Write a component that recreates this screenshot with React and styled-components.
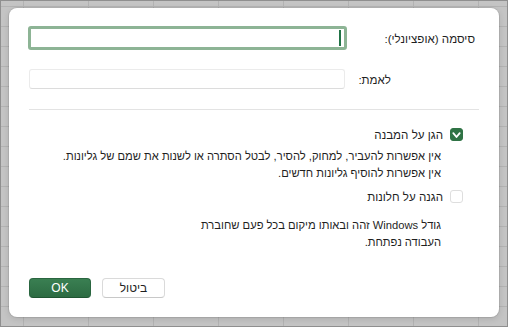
import React from "react";
import styled, { createGlobalStyle } from "styled-components";

const GlobalStyle = createGlobalStyle`
  html, body {
    margin: 0;
    padding: 0;
  }
  body {
    font-family: "Liberation Sans", Arial, sans-serif;
    color: #1f1f1f;
  }
`;

// the spreadsheet showing behind the dialog
const Sheet = styled.div`
  box-sizing: border-box;
  height: 327px;
  padding: 7px 8px 9px 8px;
  background-color: #c4c4c4;
  background-image: linear-gradient(to right, #b3b3b3 1px, transparent 1px),
    linear-gradient(to bottom, #b3b3b3 1px, transparent 1px);
  background-size: 65px 20px;
  background-position: 22px 5px;
  border: 1px solid #8f8f8f;
`;

const Dialog = styled.div`
  direction: rtl;
  box-sizing: border-box;
  height: 100%;
  background: #ffffff;
  border-radius: 8px;
  box-shadow: 0 0 0 1px rgba(0, 0, 0, 0.08), 0 2px 6px rgba(0, 0, 0, 0.12);
  padding: 18px 24px 19px 20px;
  display: flex;
  flex-direction: column;
  font-size: 11.6px;
`;

const FieldRow = styled.div`
  display: flex;
  align-items: center;
  justify-content: space-between;
  margin-top: ${(p) => p.$top || 0}px;
`;

const Label = styled.label`
  margin-right: ${(p) => p.$inset || 0}px;
  white-space: nowrap;
`;

const TextBox = styled.div`
  box-sizing: border-box;
  width: ${(p) => p.$width}px;
  height: ${(p) => (p.$focused ? 24 : 20)}px;
  margin-left: ${(p) => p.$left || 0}px;
  display: flex;
  align-items: center;
  border-radius: 3px;
  border: ${(p) => (p.$focused ? "3px solid #8db495" : "1px solid #ebebeb")};
  border-bottom-color: ${(p) => (p.$focused ? "#8db495" : "#dcdcdc")};
  background: #fff;
`;

const Caret = styled.span`
  width: 2px;
  height: 16px;
  margin-right: 3px;
  background: #217346;
`;

const Divider = styled.div`
  height: 1px;
  background: #e3e3e3;
  margin: 20px -4px 0 0;
`;

const CheckRow = styled.div`
  display: flex;
  align-items: center;
  gap: 7px;
  margin-top: ${(p) => p.$top}px;
  margin-right: 12px;
`;

const Box = styled.span`
  box-sizing: border-box;
  width: 13px;
  height: 13px;
  border-radius: 3px;
  display: flex;
  align-items: center;
  justify-content: center;
  background: ${(p) => (p.$checked ? "#2f7345" : "#fff")};
  border: 1px solid ${(p) => (p.$checked ? "#2f7345" : "#dedede")};
`;

const Description = styled.div`
  margin: ${(p) => p.$top}px 34px 0 0;
  line-height: 17px;
  font-size: 11.2px;
`;

const Line = styled.div`
  white-space: nowrap;
`;

const Footer = styled.div`
  margin-top: auto;
  display: flex;
  justify-content: flex-end;
  gap: 11px;
`;

const Button = styled.button`
  box-sizing: border-box;
  width: ${(p) => (p.$primary ? 62 : 63)}px;
  height: 20px;
  border-radius: 4px;
  font-family: inherit;
  font-size: 12px;
  padding: 0;
  cursor: pointer;
  color: ${(p) => (p.$primary ? "#fff" : "#1f1f1f")};
  background: ${(p) =>
    p.$primary ? "linear-gradient(#3a7f52, #2c6b42)" : "#fff"};
  border: 1px solid ${(p) => (p.$primary ? "#2a6640" : "#dadada")};
  border-bottom-color: ${(p) => (p.$primary ? "#1f5532" : "#c8c8c8")};
`;

function CheckMark() {
  return (
    <svg width="9" height="8" viewBox="0 0 9 8">
      <path
        d="M1.3 2.2 L4.5 6 L7.7 2.2"
        fill="none"
        stroke="#fff"
        strokeWidth="1.8"
        strokeLinecap="round"
        strokeLinejoin="round"
      />
    </svg>
  );
}

export default function App() {
  return (
    <>
      <GlobalStyle />
      <Sheet>
        <Dialog>
          <FieldRow>
            <Label>סיסמה (אופציונלי):</Label>
            <TextBox $focused $width={319} $left={-1}>
              <Caret />
            </TextBox>
          </FieldRow>
          <FieldRow $top={19}>
            <Label $inset={84}>לאמת:</Label>
            <TextBox $width={316} />
          </FieldRow>

          <Divider />

          <CheckRow $top={18}>
            <Box $checked>
              <CheckMark />
            </Box>
            <span>הגן על המבנה</span>
          </CheckRow>
          <Description $top={7}>
            <Line>אין אפשרות להעביר, למחוק, להסיר, לבטל הסתרה או לשנות את שמם של גליונות.</Line>
            <Line>אין אפשרות להוסיף גליונות חדשים.</Line>
          </Description>

          <CheckRow $top={8}>
            <Box />
            <span>הגנה על חלונות</span>
          </CheckRow>
          <Description $top={14}>
            <Line>גודל Windows זהה ובאותו מיקום בכל פעם שחוברת</Line>
            <Line>העבודה נפתחת.</Line>
          </Description>

          <Footer>
            <Button>ביטול</Button>
            <Button $primary>OK</Button>
          </Footer>
        </Dialog>
      </Sheet>
    </>
  );
}
